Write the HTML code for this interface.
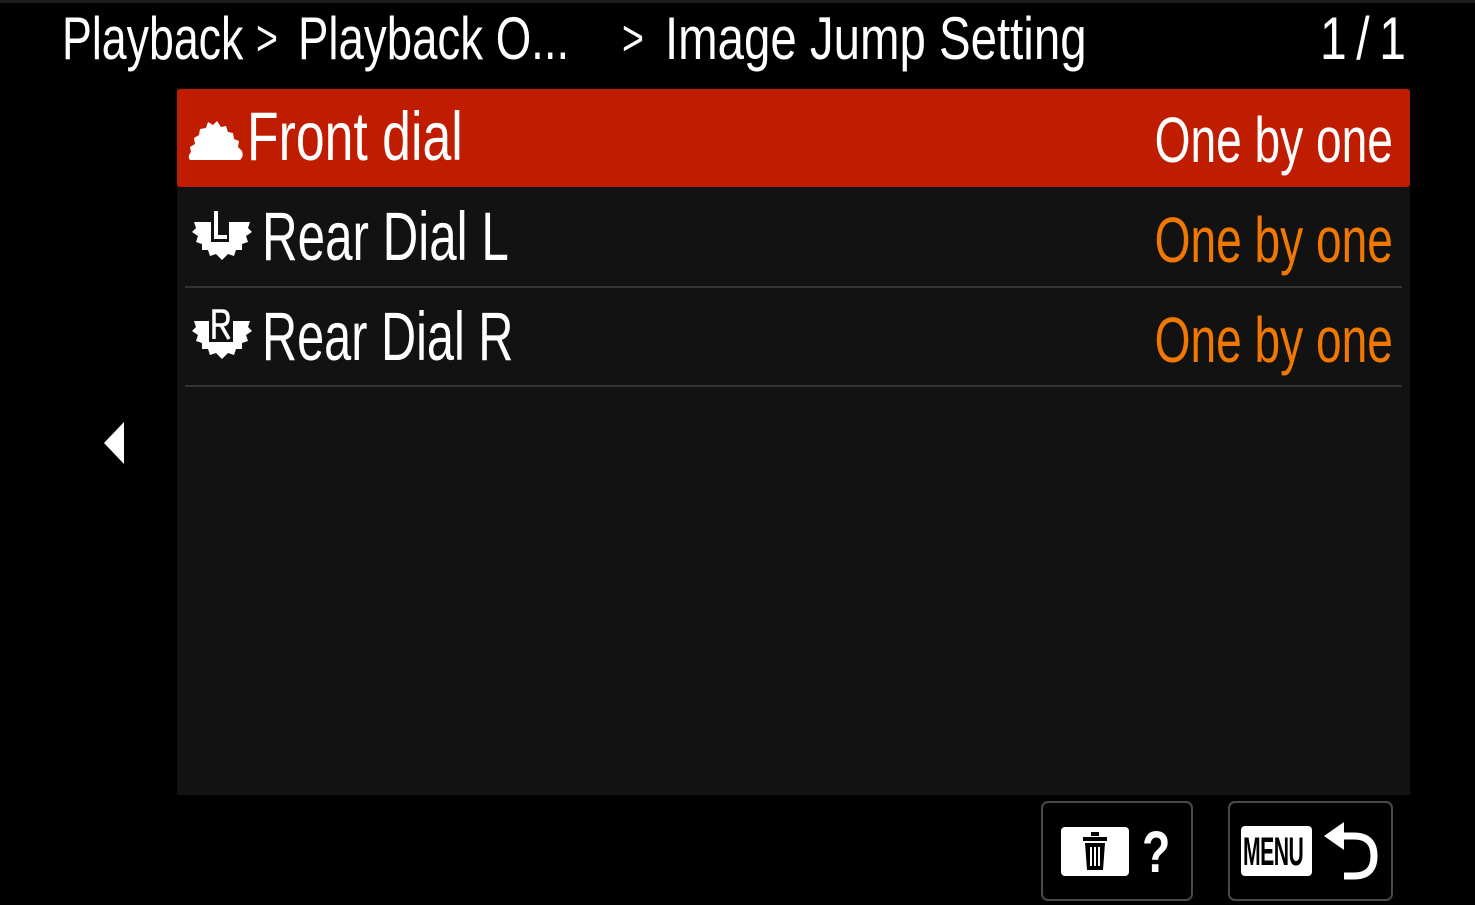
<!DOCTYPE html>
<html><head><meta charset="utf-8"><style>
*{margin:0;padding:0;box-sizing:border-box}
body{width:1475px;height:905px;background:#000;position:relative;overflow:hidden;font-family:"Liberation Sans",sans-serif;color:#fff}
.t{position:absolute;white-space:nowrap;display:inline-block;transform-origin:left top;line-height:1}
.r{transform-origin:right top}
.o{color:#f07800}
#top{position:absolute;left:0;top:0;width:1475px;height:3px;background:#1e1e1e}
#panel{position:absolute;left:177px;top:88px;width:1233px;height:707px;background:#121212}
#sel{position:absolute;left:177px;top:89px;width:1233px;height:98px;background:#c01c00;border-radius:3px}
.sep{position:absolute;left:185px;width:1217px;height:2px;background:#333}
.box{position:absolute;top:801px;height:100px;border:2px solid #4a4a4a;border-radius:7px}
</style></head><body>
<div id="top"></div>
<div class="t" style="left:62px;top:9px;font-size:60px;transform:scaleX(.745)">Playback</div>
<div class="t" style="left:256px;top:13px;font-size:50px;transform:scaleX(.75)">&gt;</div>
<div class="t" style="left:298px;top:9px;font-size:60px;transform:scaleX(.76)">Playback O...</div>
<div class="t" style="left:622px;top:13px;font-size:50px;transform:scaleX(.75)">&gt;</div>
<div class="t" style="left:665px;top:9px;font-size:60px;transform:scaleX(.79)">Image Jump Setting</div>
<div class="t" style="left:1320px;top:9px;font-size:60px;transform:scaleX(.8)">1<span style="margin:0 12px">/</span>1</div>

<div id="panel"></div>
<div id="sel"></div>
<div class="sep" style="top:286px"></div>
<div class="sep" style="top:385px"></div>

<svg style="position:absolute;left:186px;top:117px" width="58" height="44" viewBox="0 0 58 44">
<path fill="#fff" d="M4 43 L54 43 Q58 40 56 34 L52 30 L53 24 L48 22 L47 16 L42 15 L40 9 L35 10 L31 4 L27 8 L22 5 L20 11 L14 12 L13 18 L8 21 L9 27 L4 30 L5 35 Q1 40 4 43Z"/></svg>
<div class="t" style="left:247px;top:102px;font-size:69px;transform:scaleX(.75)">Front dial</div>
<div class="t r" style="right:82px;top:108px;font-size:64px;transform:scaleX(.72)">One by one</div>

<svg style="position:absolute;left:192px;top:208px" width="60" height="52" viewBox="0 0 60 52">
<path fill="#fff" d="M2 14 L58 14 L56 20 L60 24 L54 28 L56 34 L50 36 L50 42 L44 42 L42 48 L36 46 L30 52 L24 46 L18 48 L16 42 L10 42 L10 36 L4 34 L6 28 L0 24 L4 20Z"/>
<rect x="19" y="2" width="18" height="32" fill="#121212"/>
<path d="M24 3 L24 29 L35 29" stroke="#fff" stroke-width="4" fill="none"/></svg>
<div class="t" style="left:262px;top:202px;font-size:69px;transform:scaleX(.715)">Rear Dial L</div>
<div class="t r o" style="right:82px;top:208px;font-size:64px;transform:scaleX(.72)">One by one</div>

<svg style="position:absolute;left:192px;top:307px" width="60" height="52" viewBox="0 0 60 52">
<path fill="#fff" d="M2 14 L58 14 L56 20 L60 24 L54 28 L56 34 L50 36 L50 42 L44 42 L42 48 L36 46 L30 52 L24 46 L18 48 L16 42 L10 42 L10 36 L4 34 L6 28 L0 24 L4 20Z"/>
<rect x="17" y="1" width="24" height="34" fill="#121212"/>
<path d="M22 32 L22 4 L30 4 Q36 4 36 11 Q36 18 29 18 L22 18 M29 18 L37 32" stroke="#fff" stroke-width="3.5" fill="none"/></svg>
<div class="t" style="left:262px;top:302px;font-size:69px;transform:scaleX(.705)">Rear Dial R</div>
<div class="t r o" style="right:82px;top:308px;font-size:64px;transform:scaleX(.72)">One by one</div>

<svg style="position:absolute;left:102px;top:422px" width="24" height="42"><path d="M22 0 L22 42 L2 21Z" fill="#fff"/></svg>

<div class="box" style="left:1041px;width:152px"></div>
<div class="box" style="left:1228px;width:165px"></div>
<div style="position:absolute;left:1061px;top:827px;width:68px;height:49px;background:#fff;border-radius:4px"></div>
<svg style="position:absolute;left:1078px;top:831px" width="34" height="42" viewBox="0 0 34 42">
<path d="M13 3 L21 3 M5 8 L29 8" stroke="#000" stroke-width="4"/>
<path d="M7 12 L27 12 L25 39 L9 39Z" fill="#000"/>
<path d="M13 16 L13 35 M17 16 L17 35 M21 16 L21 35" stroke="#fff" stroke-width="2"/></svg>
<div class="t" style="left:1142px;top:824px;font-size:58px;font-weight:bold;transform:scaleX(.8)">?</div>
<div style="position:absolute;left:1241px;top:826px;width:71px;height:50px;background:#fff;border-radius:4px"></div>
<div class="t" style="left:1243px;top:832px;font-size:40px;font-weight:bold;color:#000;transform:scaleX(.53);letter-spacing:-1px">MENU</div>
<svg style="position:absolute;left:1324px;top:822px" width="56" height="58" viewBox="0 0 56 58">
<path d="M0 14 L20 0 L20 28Z" fill="#fff"/>
<path d="M18 14 L30 14 Q50 14 50 34 Q50 54 30 54 L20 54" stroke="#fff" stroke-width="7" fill="none"/></svg>
</body></html>
